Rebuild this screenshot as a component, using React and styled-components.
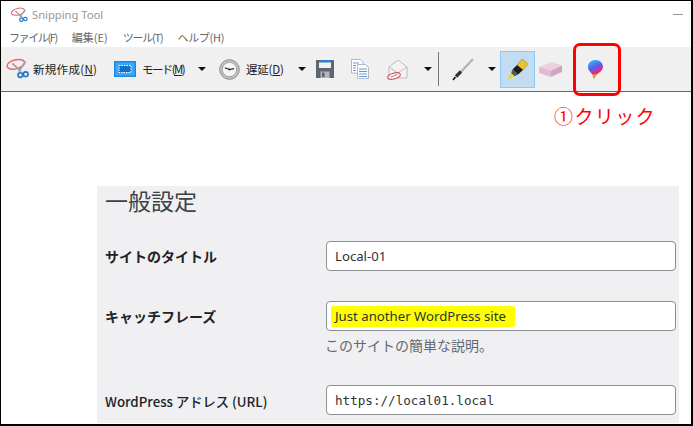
import React from 'react';
import styled, { createGlobalStyle } from 'styled-components';

const JP = '"Noto Sans CJK JP", "Noto Sans", sans-serif';

const GlobalStyle = createGlobalStyle`
  html, body {
    margin: 0;
    padding: 0;
    background: #fff;
  }
  * {
    box-sizing: border-box;
  }
  svg {
    flex: none;
  }
`;

const Frame = styled.div`
  position: relative;
  width: 693px;
  height: 426px;
  overflow: hidden;
  background: #fff;
  border-style: solid;
  border-color: #000;
  border-width: 1px 2px 2px 1px;
  font-family: ${JP};
  display: flex;
  flex-direction: column;
`;

const TitleBar = styled.div`
  height: 26px;
  flex: none;
  display: flex;
  align-items: center;
  padding: 1px 8px 0 9px;
  gap: 2px;
  color: #969696;
  font: 11.2px "Noto Sans", sans-serif;
`;

const Minimize = styled.span`
  width: 10px;
  height: 1px;
  margin-left: auto;
  background: #999;
`;

const MenuBar = styled.div`
  height: 20px;
  flex: none;
  display: flex;
  align-items: center;
  padding-left: 8px;
  gap: 15px;
  color: #666;
  font-size: 11px;
`;

const MenuItem = styled.span`
  letter-spacing: ${p => p.$ls || 0}px;
  white-space: nowrap;
`;

const Toolbar = styled.div`
  height: 45px;
  flex: none;
  display: flex;
  align-items: center;
  background: #f0f0f0;
  border-bottom: 1px solid #666;
`;

const ToolLabel = styled.span`
  font-size: 11.5px;
  color: #222;
  white-space: nowrap;
  letter-spacing: ${p => p.$ls}px;
  u { text-underline-offset: 1px; }
`;

const Tool = styled.div`
  width: ${p => p.$w}px;
  margin-left: ${p => p.$ml || 0}px;
  height: 37px;
  flex: none;
  display: flex;
  align-items: center;
  justify-content: ${p => (p.$center ? 'center' : 'flex-start')};
  gap: ${p => p.$gap || 0}px;
  background: ${p => (p.$active ? '#c2dcf2' : 'transparent')};
  border: ${p => (p.$active ? '1px solid #90c8f6' : 'none')};
`;

const Caret = styled.span`
  width: 0;
  height: 0;
  flex: none;
  margin-left: ${p => p.$ml || 0}px;
  border-style: solid;
  border-width: 4px 4px 0 4px;
  border-color: #111 transparent transparent transparent;
`;

const Separator = styled.span`
  width: 1px;
  height: 34px;
  flex: none;
  margin-left: ${p => p.$ml}px;
  background: #777;
`;

const Content = styled.main`
  flex: 1;
  min-height: 0;
  padding: 94px 12px 0 96px;
`;

const Panel = styled.section`
  height: 237px;
  background: #f0f0f2;
  padding: 0 4px 0 8px;
`;

const Heading = styled.h1`
  margin: 0;
  height: 55px;
  font-size: 23px;
  line-height: 28px;
  font-weight: 400;
  color: #3c4348;
`;

const Row = styled.div`
  display: grid;
  grid-template-columns: 221px 350px;
  align-items: start;
  margin-bottom: ${p => p.$mb}px;
`;

const Label = styled.label`
  font-size: ${p => (p.$small ? 13.3 : 14)}px;
  line-height: 30px;
  padding-top: ${p => (p.$small ? 2 : 0)}px;
  font-weight: ${p => (p.$small ? 500 : 700)};
  color: #1d2327;
  white-space: nowrap;
`;

const Input = styled.div`
  height: 30px;
  display: flex;
  align-items: center;
  padding: 0 8px;
  background: #fff;
  border: 1px solid #8c8f94;
  border-radius: 4px;
  font-family: ${p => (p.$mono ? '"DejaVu Sans Mono", monospace' : '"Noto Sans", sans-serif')};
  font-size: ${p => (p.$mono ? 12.6 : 13.2)}px;
  color: #2c3338;
`;

const Marked = styled.span`
  background: #ffff00;
  margin-left: -4px;
  padding: 1px 9px 2px 4px;
  border-radius: 2px;
`;

const Hint = styled.p`
  margin: 4px 0 0 -1px;
  font-size: 14px;
  line-height: 20px;
  color: #646970;
`;

const Callout = styled.div`
  position: absolute;
  left: 572px;
  top: 42px;
  width: 48px;
  height: 53px;
  border: 3px solid #ff0000;
  border-radius: 7px;
`;

const CalloutText = styled.div`
  position: absolute;
  left: 553px;
  top: 101px;
  font-size: 19px;
  line-height: 28px;
  letter-spacing: 1.4px;
  color: #ff0000;
  white-space: nowrap;
`;

const Scissors = ({ size = 30 }) => (
  <svg width={size} height={size * 0.8} viewBox="0 0 30 24" fill="none">
    <ellipse cx="12" cy="7" rx="10" ry="5" stroke="#e8656a" strokeWidth="1.6" transform="rotate(-14 12 7)" />
    <path d="M8 6l10 9M23 4l-8 11" stroke="#9a9ea4" strokeWidth="1.8" />
    <circle cx="17" cy="19" r="2.6" stroke="#1f78c8" strokeWidth="1.8" />
    <circle cx="23" cy="18" r="2.6" stroke="#1f78c8" strokeWidth="1.8" />
  </svg>
);

const ModeIcon = () => (
  <svg width="22" height="16" viewBox="0 0 22 16">
    <rect width="22" height="16" fill="#1a8ae6" />
    <rect x="1.5" y="1.5" width="19" height="13" fill="#3ea8f5" />
    <rect x="5" y="4.5" width="12" height="7" fill="#1272c8" stroke="#fff" strokeWidth="1" strokeDasharray="1.5 1" />
  </svg>
);

const ClockIcon = () => (
  <svg width="21" height="21" viewBox="0 0 21 21">
    <circle cx="10.5" cy="10.5" r="9.8" fill="#c4c4c4" stroke="#8b8b8b" />
    <circle cx="10.5" cy="10.5" r="7.2" fill="#f6f6f6" stroke="#777" strokeWidth="0.6" />
    <path d="M10.5 10.5L5.8 8.8M10.5 10.5L15 9.6" stroke="#222" strokeWidth="1.2" />
    <circle cx="10.5" cy="10.5" r="1" fill="#222" />
  </svg>
);

const SaveIcon = () => (
  <svg width="18" height="18" viewBox="0 0 18 18">
    <path d="M0 0h18v18H0z" fill="#5e6670" />
    <rect x="3" y="0" width="12" height="2.5" fill="#2e7fd0" />
    <rect x="3" y="2.5" width="12" height="5.5" fill="#eef0f2" />
    <rect x="4.5" y="11.5" width="9" height="6.5" fill="#b5b9bd" />
    <rect x="6" y="12.5" width="2.5" height="4.5" fill="#5e6670" />
  </svg>
);

const CopyIcon = () => (
  <svg width="18" height="20" viewBox="0 0 18 20" fill="#fff" stroke="#a4a8ad" strokeWidth="0.8">
    <path d="M0.5 0.5h9l2.5 2.5v11h-11.5z" />
    <path d="M6.5 5.5h8l3 3v11h-11z" />
    <path d="M2 4h6M2 6.5h3M2 9h3M2 11.5h3M8 10h8M8 12.5h8M8 15h8M8 17.5h8" stroke="#5a9be0" strokeWidth="1" />
  </svg>
);

const MailIcon = () => (
  <svg width="23" height="21" viewBox="0 0 23 21" fill="none">
    <path d="M3 8l9-7 9 7v11H3z" fill="#f4f4f4" stroke="#bcbcbc" />
    <path d="M3 8l9 6 9-6" stroke="#bcbcbc" />
    <ellipse cx="8" cy="17" rx="6.5" ry="2.8" fill="#fff" stroke="#e8434a" strokeWidth="1.1" transform="rotate(-18 8 17)" />
    <path d="M4.5 18l7-2.5" stroke="#999" strokeWidth="1.1" />
  </svg>
);

const PenIcon = () => (
  <svg width="22" height="23" viewBox="0 0 22 23" fill="none">
    <path d="M21 1L8 15" stroke="#a8b0b8" strokeWidth="2" />
    <path d="M9 13.5L4 18.5" stroke="#333" strokeWidth="3.2" />
    <path d="M3.5 19L1 22" stroke="#111" strokeWidth="1.6" />
  </svg>
);

const MarkerIcon = () => (
  <svg width="22" height="22" viewBox="0 0 22 22">
    <path d="M15 1l6 5-5 6-6-5z" fill="#e8c42a" stroke="#a98a1a" strokeWidth="0.6" />
    <path d="M10 7l6 5-5 4.5-5.5-5z" fill="#1c1c1c" />
    <path d="M5.5 11.5l5.5 5-3.5 1.8-3.4-3.2z" fill="#555" />
    <path d="M4 15l3.5 3.3L0.5 21.5z" fill="#e9d318" />
  </svg>
);

const EraserIcon = () => (
  <svg width="23" height="15" viewBox="0 0 23 15">
    <path d="M0 5l13-5 10 3.5-11 5z" fill="#ecd0e0" />
    <path d="M0 5l12 3.5V15L0 11z" fill="#e0bcd2" />
    <path d="M12 8.5L23 3.5V10l-11 5z" fill="#cfa5c0" />
  </svg>
);

const PaintIcon = () => (
  <svg width="15" height="19" viewBox="0 0 15 19">
    <defs>
      <linearGradient id="drop" x1="0.2" y1="0" x2="0.6" y2="1">
        <stop offset="0" stopColor="#28c4f0" />
        <stop offset="0.4" stopColor="#5a5cf0" />
        <stop offset="0.7" stopColor="#e6287a" />
        <stop offset="1" stopColor="#f0403a" />
      </linearGradient>
    </defs>
    <path d="M7.5 0C3 0 0 3 0 7c0 3.6 3 5.5 4.5 7.5L6 19c1-2.5 1.5-3.5 3.5-5 2.5-2 5.5-4 5.500-7 0-4-3.200-7-7.500-7z" fill="url(#drop)" />
    <path d="M6 19l-1.5-4.500 4.500-.5z" fill="#f0a030" />
  </svg>
);

const Key = ({ label, k, ls = -0.2 }) => (
  <ToolLabel $ls={ls}>{label}(<u>{k}</u>)</ToolLabel>
);

export default function App() {
  return (
    <Frame>
      <GlobalStyle />
      <TitleBar>
        <Scissors size={20} />
        <span>Snipping Tool</span>
        <Minimize />
      </TitleBar>
      <MenuBar>
        <MenuItem $ls={-1.4}>ファイル(F)</MenuItem>
        <MenuItem>編集(E)</MenuItem>
        <MenuItem $ls={-1.2}>ツール(T)</MenuItem>
        <MenuItem $ls={-0.3}>ヘルプ(H)</MenuItem>
      </MenuBar>
      <Toolbar>
        <Tool $w={109} $ml={4} $gap={1}>
          <Scissors size={27} />
          <Key label="新規作成" k="N" ls={0.3} />
        </Tool>
        <Tool $w={72} $gap={6}>
          <ModeIcon />
          <Key label="モード" k="M" ls={-1.6} />
        </Tool>
        <Caret $ml={12} />
        <Tool $w={79} $ml={13} $gap={6}>
          <ClockIcon />
          <Key label="遅延" k="D" />
        </Tool>
        <Caret />
        <Tool $w={18} $ml={10} $center>
          <SaveIcon />
        </Tool>
        <Tool $w={18} $ml={17} $center>
          <CopyIcon />
        </Tool>
        <Tool $w={23} $ml={17} $center>
          <MailIcon />
        </Tool>
        <Caret $ml={15} />
        <Separator $ml={6} />
        <Tool $w={22} $ml={13} $center>
          <PenIcon />
        </Tool>
        <Caret $ml={14} />
        <Tool $w={35} $ml={4} $active $center>
          <MarkerIcon />
        </Tool>
        <Tool $w={23} $ml={4} $center>
          <EraserIcon />
        </Tool>
        <Tool $w={15} $ml={26} $center>
          <PaintIcon />
        </Tool>
      </Toolbar>
      <Content>
        <Panel>
          <Heading>一般設定</Heading>
          <Row $mb={30}>
            <Label>サイトのタイトル</Label>
            <Input>Local-01</Input>
          </Row>
          <Row $mb={30}>
            <Label>キャッチフレーズ</Label>
            <div>
              <Input><Marked>Just another WordPress site</Marked></Input>
              <Hint>このサイトの簡単な説明。</Hint>
            </div>
          </Row>
          <Row $mb={0}>
            <Label $small>WordPress アドレス (URL)</Label>
            <Input $mono>https://local01.local</Input>
          </Row>
        </Panel>
      </Content>
      <Callout />
      <CalloutText>①クリック</CalloutText>
    </Frame>
  );
}
